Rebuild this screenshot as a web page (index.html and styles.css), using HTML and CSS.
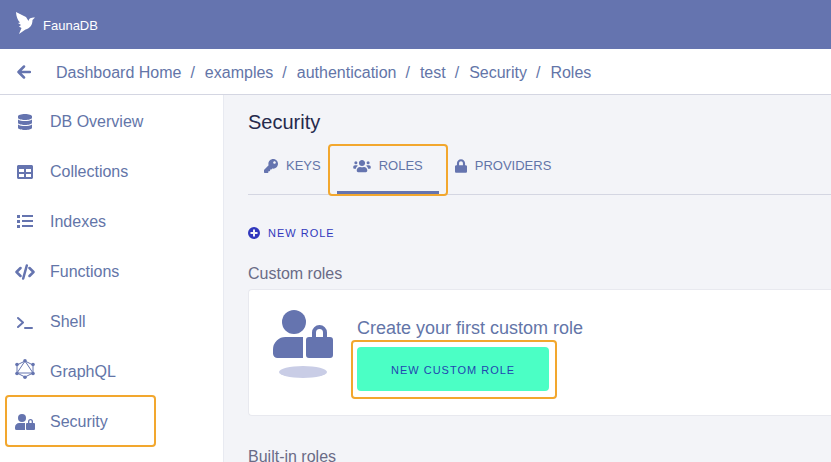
FILE: index.html
```html
<!DOCTYPE html>
<html lang="en">
<head>
<meta charset="utf-8">
<title>FaunaDB - Roles</title>
<meta name="viewport" content="width=device-width, initial-scale=1">
<link rel="stylesheet" href="styles.css">
</head>
<body>
<svg class="defs" aria-hidden="true">
  <symbol id="user-lock" viewBox="0 0 60 48">
    <circle cx="21" cy="12" r="12"/>
    <path d="M13 27h17v21H4.500a4.500 4.500 0 0 1-4.500-4.500v-4A12.500 12.500 0 0 1 13 27z"/>
    <path fill-rule="evenodd" d="M36 27h3v-4.500a7.500 7.500 0 0 1 15 0V27h3a3 3 0 0 1 3 3v15a3 3 0 0 1-3 3H36a3 3 0 0 1-3-3V30a3 3 0 0 1 3-3zm7 0h7v-4.500a3.500 3.500 0 0 0-7 0z"/>
  </symbol>
</svg>
<header class="topbar">
  <a class="brand" href="#">
    <svg class="logo" viewBox="0 0 19 22" aria-hidden="true"><path d="M0 0l10 5 2.500 4c.5-2.500 2-3.500 6.500-3.500L16.500 8c0 5-2.500 8.500-7 9.500L3 22l2.500-6L3 14.500 5 13 2 11l2-.5C1.500 8 .3 4.500 0 0z"/></svg>
    <span>FaunaDB</span>
  </a>
</header>
<nav class="crumbs" aria-label="Breadcrumb">
  <a class="back" href="#" aria-label="Back"><svg viewBox="0 0 14 14" class="line bold"><path d="M13 7H2M7 1.500L1.500 7 7 12.500"/></svg></a>
  <ol>
    <li><a href="#">Dashboard Home</a></li>
    <li><a href="#">examples</a></li>
    <li><a href="#">authentication</a></li>
    <li><a href="#">test</a></li>
    <li><a href="#">Security</a></li>
    <li><a href="#">Roles</a></li>
  </ol>
</nav>
<div class="layout">
  <nav class="sidebar" aria-label="Database">
    <a href="#"><svg viewBox="0 0 448 512"><path d="M448 73.143v45.714C448 159.143 347.667 192 224 192S0 159.143 0 118.857V73.143C0 32.857 100.333 0 224 0s224 32.857 224 73.143zM448 176v102.857C448 319.143 347.667 352 224 352S0 319.143 0 278.857V176c48.125 33.143 136.208 48.572 224 48.572S399.874 209.143 448 176zm0 160v102.857C448 479.143 347.667 512 224 512S0 479.143 0 438.857V336c48.125 33.143 136.208 48.572 224 48.572S399.874 369.143 448 336z"/></svg><span>DB Overview</span></a>
    <a href="#"><svg viewBox="0 0 512 512"><path d="M464 32H48C21.490 32 0 53.490 0 80v352c0 26.510 21.490 48 48 48h416c26.510 0 48-21.490 48-48V80c0-26.510-21.490-48-48-48zM224 416H64v-96h160v96zm0-160H64v-96h160v96zm224 160H288v-96h160v96zm0-160H288v-96h160v96z"/></svg><span>Collections</span></a>
    <a href="#"><svg viewBox="0 0 16 16"><path d="M0 1h3v3H0zM0 6h3v3H0zM0 11h3v3H0zM5 1h11v2H5zM5 6h11v2H5zM5 11h11v2H5z"/></svg><span>Indexes</span></a>
    <a href="#"><svg class="line bold wide" viewBox="0 0 20 16"><path d="M5.500 4L1.500 8l4 4M14.500 4l4 4-4 4M11.800 1.500L8.200 14.500"/></svg><span>Functions</span></a>
    <a href="#"><svg class="line" viewBox="0 0 16 16"><path d="M1 4l5 4.500L1 13M8 14h7"/></svg><span>Shell</span></a>
    <a href="#"><svg class="graph wide" viewBox="0 0 20 26"><path d="M10 2l8 4v8l-8 4-8-4V6zM10 2L2 14h16z"/><g><circle cx="10" cy="1.800" r="1.800"/><circle cx="18" cy="5.500" r="1.800"/><circle cx="18" cy="14.500" r="1.800"/><circle cx="10" cy="18.200" r="1.800"/><circle cx="2" cy="14.500" r="1.800"/><circle cx="2" cy="5.500" r="1.800"/></g></svg><span>GraphQL</span></a>
    <a class="marked" href="#" aria-current="page"><svg class="wide"><use href="#user-lock"/></svg><span>Security</span></a>
  </nav>
  <main class="content">
    <h1>Security</h1>
    <nav class="tabs" aria-label="Security sections">
      <a href="#"><svg width="14" height="14" viewBox="0 0 512 512"><path d="M512 176.001C512 273.203 433.202 352 336 352c-11.220 0-22.190-1.062-32.827-3.069l-24.012 27.014A23.999 23.999 0 0 1 261.223 384H224v40c0 13.255-10.745 24-24 24h-40v40c0 13.255-10.745 24-24 24H24c-13.255 0-24-10.745-24-24v-78.059c0-6.365 2.529-12.470 7.029-16.971l161.802-161.802C163.108 213.814 160 195.271 160 176 160 78.798 238.797.001 335.999 0 433.488-.001 512 78.511 512 176.001zM336 128c0 26.510 21.490 48 48 48s48-21.490 48-48-21.490-48-48-48-48 21.490-48 48z"/></svg>KEYS</a>
      <a class="active marked" href="#" aria-current="page"><svg width="18" height="14" viewBox="0 0 640 512"><path d="M96 192a56 56 0 1 0 0-112 56 56 0 0 0 0 112zm448 0a56 56 0 1 0 0-112 56 56 0 0 0 0 112zm32 40h-64c-17 0-33 7-45 18 40 22 69 62 75 110h66c18 0 32-14 32-32v-32c0-35-29-64-64-64zm-256 24c62 0 112-50 112-112S382 32 320 32 208 82 208 144s50 112 112 112zm77 32h-9c-42 21-94 21-136 0h-9c-63 0-115 52-115 115v29c0 26 22 48 48 48h288c26 0 48-22 48-48v-29c0-63-52-115-115-115zM173 250c-12-11-28-18-45-18H64c-35 0-64 29-64 64v32c0 18 14 32 32 32h66c6-48 35-88 75-110z"/></svg>ROLES</a>
      <a href="#"><svg width="12" height="14" viewBox="0 0 448 512"><path d="M400 224h-24v-72C376 68.200 307.800 0 224 0S72 68.200 72 152v72H48c-26.500 0-48 21.500-48 48v192c0 26.500 21.500 48 48 48h352c26.500 0 48-21.500 48-48V272c0-26.500-21.500-48-48-48zm-104 0H152v-72c0-39.700 32.300-72 72-72s72 32.300 72 72v72z"/></svg>PROVIDERS</a>
    </nav>
    <button class="new-role" type="button"><svg viewBox="0 0 12 12"><path fill-rule="evenodd" d="M6 0a6 6 0 1 1 0 12A6 6 0 0 1 6 0zM5 2.500V5H2.500v2H5v2.500h2V7h2.500V5H7V2.500z"/></svg>NEW ROLE</button>
    <h2>Custom roles</h2>
    <section class="card">
      <svg class="art" viewBox="0 0 60 68" aria-hidden="true"><use href="#user-lock" width="60" height="48"/><ellipse class="shade" cx="30" cy="62" rx="24" ry="6"/></svg>
      <div>
        <h3>Create your first custom role</h3>
        <div class="cta marked"><button type="button">NEW CUSTOM ROLE</button></div>
      </div>
    </section>
    <h2>Built-in roles</h2>
  </main>
</div>
</body>
</html>
```
FILE: styles.css
```css
:root {
  --brand: #6574af;
  --line: #d4d6e2;
  --mark: #f2a72e;
  --page: #f3f4f8;
}

*, *::before, *::after { box-sizing: border-box; }

/* Short windows scroll without a visible bar. */
html { scrollbar-width: none; }

body {
  margin: 0;
  min-height: 100vh;
  display: flex;
  flex-direction: column;
  background: #fff;
  color: #6375a8;
  font: 16px/20px "Liberation Sans", Arial, sans-serif;
}

a { color: inherit; text-decoration: none; }
h1, h2, h3 { margin: 0; font-weight: 400; }
button { border: 0; font: inherit; cursor: pointer; }
svg { fill: var(--brand); flex: none; }

.defs { position: absolute; width: 0; height: 0; }
.line { fill: none; stroke: var(--brand); stroke-width: 2; stroke-linecap: round; stroke-linejoin: round; }
.bold { stroke-width: 2.5; }

.topbar {
  display: flex;
  height: 49px;
  padding: 0 16px;
  align-items: center;
  background: var(--brand);
  color: #fff;
}
.brand { display: flex; align-items: center; gap: 8px; font-size: 13px; }
.brand span { padding-top: 2px; }
.logo { width: 19px; height: 22px; margin-bottom: 4px; fill: #fff; }

.crumbs {
  display: flex;
  align-items: center;
  height: 46px;
  padding: 0 17px;
  border-bottom: 1px solid var(--line);
}
.back { display: flex; width: 39px; }
.back svg { width: 14px; height: 14px; }
.crumbs ol { display: flex; margin: 0; padding: 2px 0 0; list-style: none; }
.crumbs li + li::before { content: "/"; margin: 0 10px 0 9px; }

.layout { display: flex; flex: 1; }
.sidebar {
  flex: none;
  width: 224px;
  padding-top: 2px;
  border-right: 1px solid #e8eaf1;
}
.sidebar a {
  display: grid;
  grid-template-columns: 20px auto;
  align-items: center;
  justify-items: center;
  justify-content: start;
  gap: 15px;
  height: 50px;
  padding-left: 15px;
}
.sidebar svg { width: 16px; height: 16px; }
.sidebar .wide { width: 20px; height: 16px; }
.sidebar .graph { height: 26px; }
.sidebar span { justify-self: start; }
.graph > path { fill: none; stroke: var(--brand); stroke-width: 1; }

.marked { position: relative; }
.marked::after {
  content: "";
  position: absolute;
  border: 2px solid var(--mark);
  border-radius: 4px;
  pointer-events: none;
}
.sidebar .marked::after { left: 5px; top: -2px; width: 151px; height: 52px; }

.content {
  flex: 1;
  min-width: 0;
  padding: 16px 0 0 24px;
  background: var(--page);
}
h1 { color: #262a4c; font-size: 20px; line-height: 22px; }
h2 { color: #6a6b86; font-size: 16px; line-height: 20px; }
h3 { font-size: 18px; line-height: 20px; }

.tabs { display: flex; height: 62px; border-bottom: 1px solid var(--line); }
.tabs a {
  display: flex;
  align-items: center;
  gap: 8px;
  padding: 8px 16px 0;
  border-bottom: 3px solid transparent;
  font-size: 13px;
}
.tabs .active { border-bottom-color: var(--brand); }
.tabs .marked::after { inset: 11px -9px -5px; }

.new-role {
  display: flex;
  align-items: center;
  gap: 8px;
  margin: 28px 0 21px;
  padding: 0;
  background: none;
  color: #3138bd;
  font-size: 11px;
  line-height: 20px;
  letter-spacing: 1px;
}
.new-role svg { width: 12px; height: 12px; fill: #3138bd; }

.card {
  display: flex;
  gap: 24px;
  margin: 5px 0 31px;
  padding: 20px 24px 24px;
  border: 1px solid #e8e9ef;
  border-right: 0;
  border-radius: 4px 0 0 4px;
  background: #fff;
}
.art { width: 60px; height: 68px; }
.shade { fill: #c9cde6; }
.card h3 { margin: 8px 0 9px; }
.cta { width: fit-content; }
.cta button {
  display: block;
  padding: 13px 34px 11px;
  border-radius: 4px;
  background: #4bffc5;
  color: #2246b0;
  font-size: 11px;
  line-height: 20px;
  letter-spacing: 1px;
}
.cta::after { inset: -7px -8px -8px -6px; }
```
